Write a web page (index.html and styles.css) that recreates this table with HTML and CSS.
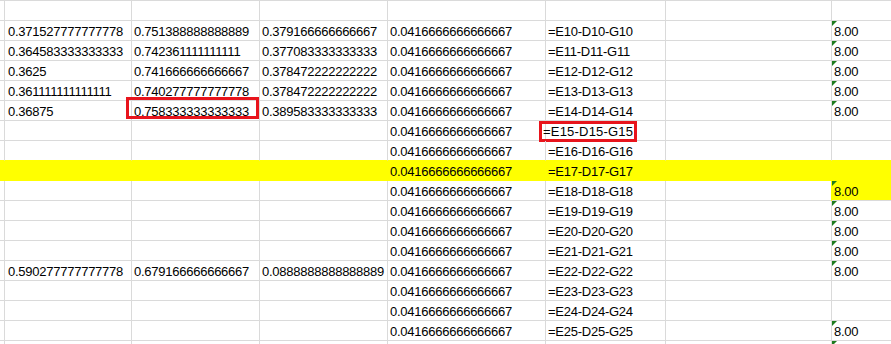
FILE: index.html
```html
<!DOCTYPE html>
<html>
<head>
<meta charset="utf-8">
<link rel="stylesheet" href="styles.css">
</head>
<body>
<div class="sheet">
  <div class="row"><div class="c"></div><div class="c"></div><div class="c"></div><div class="c"></div><div class="c"></div><div class="c"></div><div class="c"></div><div class="c"></div></div>
  <div class="row"><div class="c"></div><div class="c">0.371527777777778</div><div class="c">0.751388888888889</div><div class="c">0.379166666666667</div><div class="c">0.0416666666666667</div><div class="c">=E10-D10-G10</div><div class="c"></div><div class="c flag">8.00</div></div>
  <div class="row"><div class="c"></div><div class="c">0.364583333333333</div><div class="c">0.742361111111111</div><div class="c">0.377083333333333</div><div class="c">0.0416666666666667</div><div class="c">=E11-D11-G11</div><div class="c"></div><div class="c flag">8.00</div></div>
  <div class="row"><div class="c"></div><div class="c">0.3625</div><div class="c">0.741666666666667</div><div class="c">0.378472222222222</div><div class="c">0.0416666666666667</div><div class="c">=E12-D12-G12</div><div class="c"></div><div class="c flag">8.00</div></div>
  <div class="row"><div class="c"></div><div class="c">0.361111111111111</div><div class="c">0.740277777777778</div><div class="c">0.378472222222222</div><div class="c">0.0416666666666667</div><div class="c">=E13-D13-G13</div><div class="c"></div><div class="c flag">8.00</div></div>
  <div class="row"><div class="c"></div><div class="c">0.36875</div><div class="c mark-a">0.758333333333333</div><div class="c">0.389583333333333</div><div class="c">0.0416666666666667</div><div class="c">=E14-D14-G14</div><div class="c"></div><div class="c flag">8.00</div></div>
  <div class="row"><div class="c"></div><div class="c"></div><div class="c"></div><div class="c"></div><div class="c">0.0416666666666667</div><div class="c mark-b">=E15-D15-G15</div><div class="c"></div><div class="c"></div></div>
  <div class="row pre-fill"><div class="c"></div><div class="c"></div><div class="c"></div><div class="c"></div><div class="c">0.0416666666666667</div><div class="c">=E16-D16-G16</div><div class="c"></div><div class="c"></div></div>
  <div class="row fill"><div class="c"></div><div class="c"></div><div class="c"></div><div class="c"></div><div class="c">0.0416666666666667</div><div class="c">=E17-D17-G17</div><div class="c"></div><div class="c"></div></div>
  <div class="row"><div class="c"></div><div class="c"></div><div class="c"></div><div class="c"></div><div class="c">0.0416666666666667</div><div class="c">=E18-D18-G18</div><div class="c"></div><div class="c flag hl">8.00</div></div>
  <div class="row"><div class="c"></div><div class="c"></div><div class="c"></div><div class="c"></div><div class="c">0.0416666666666667</div><div class="c">=E19-D19-G19</div><div class="c"></div><div class="c flag">8.00</div></div>
  <div class="row"><div class="c"></div><div class="c"></div><div class="c"></div><div class="c"></div><div class="c">0.0416666666666667</div><div class="c">=E20-D20-G20</div><div class="c"></div><div class="c flag">8.00</div></div>
  <div class="row"><div class="c"></div><div class="c"></div><div class="c"></div><div class="c"></div><div class="c">0.0416666666666667</div><div class="c">=E21-D21-G21</div><div class="c"></div><div class="c flag">8.00</div></div>
  <div class="row"><div class="c"></div><div class="c">0.590277777777778</div><div class="c">0.679166666666667</div><div class="c">0.0888888888888889</div><div class="c">0.0416666666666667</div><div class="c">=E22-D22-G22</div><div class="c"></div><div class="c flag">8.00</div></div>
  <div class="row"><div class="c"></div><div class="c"></div><div class="c"></div><div class="c"></div><div class="c">0.0416666666666667</div><div class="c">=E23-D23-G23</div><div class="c"></div><div class="c"></div></div>
  <div class="row"><div class="c"></div><div class="c"></div><div class="c"></div><div class="c"></div><div class="c">0.0416666666666667</div><div class="c">=E24-D24-G24</div><div class="c"></div><div class="c"></div></div>
  <div class="row"><div class="c"></div><div class="c"></div><div class="c"></div><div class="c"></div><div class="c">0.0416666666666667</div><div class="c">=E25-D25-G25</div><div class="c"></div><div class="c flag">8.00</div></div>
  <div class="row"><div class="c"></div><div class="c"></div><div class="c"></div><div class="c"></div><div class="c"></div><div class="c"></div><div class="c"></div><div class="c flag"></div></div>
</div>
</body>
</html>
```

FILE: styles.css
```css
html, body {
  margin: 0;
  padding: 0;
  background: #ffffff;
  overflow: hidden;
}

.sheet {
  width: 891px;
  border-top: 1px solid #dadada;
  font-family: "Liberation Sans", Arial, sans-serif;
  font-size: 13px;
  letter-spacing: -0.25px;
  color: #000000;
}

.row {
  display: grid;
  grid-template-columns: 5px 127px 128px 128px 158px 120px 166px 1fr;
  height: 20px;
}

.c {
  position: relative;
  box-sizing: border-box;
  height: 20px;
  padding: 2px 0 0 2px;
  line-height: 17px;
  white-space: nowrap;
  border-right: 1px solid #dadada;
  border-bottom: 1px solid #dadada;
}

.row .c:nth-child(1) {
  padding: 0;
}

.row .c:nth-child(2) {
  padding-left: 3px;
}

.row .c:last-child {
  border-right: none;
}

.pre-fill .c {
  border-bottom-color: #ffff00;
}

.fill .c {
  background: #ffff00;
  border-color: #ffff00;
}

.hl {
  background: #ffff00;
  box-shadow: -1px 0 0 #ffff00;
}

.flag::before {
  content: "";
  position: absolute;
  top: 0;
  left: 0;
  width: 0;
  height: 0;
  border-top: 5px solid #1e7b1e;
  border-right: 5px solid transparent;
}

.mark-a::after {
  content: "";
  position: absolute;
  left: -6px;
  top: -4px;
  width: 133px;
  height: 22px;
  box-sizing: border-box;
  border: 3px solid #e8141c;
}

.mark-b {
  text-indent: -5px;
  letter-spacing: 0.2px;
}

.mark-b::after {
  content: "";
  position: absolute;
  left: -7px;
  top: 0;
  width: 98px;
  height: 21px;
  box-sizing: border-box;
  border: 3px solid #e8141c;
}
```
